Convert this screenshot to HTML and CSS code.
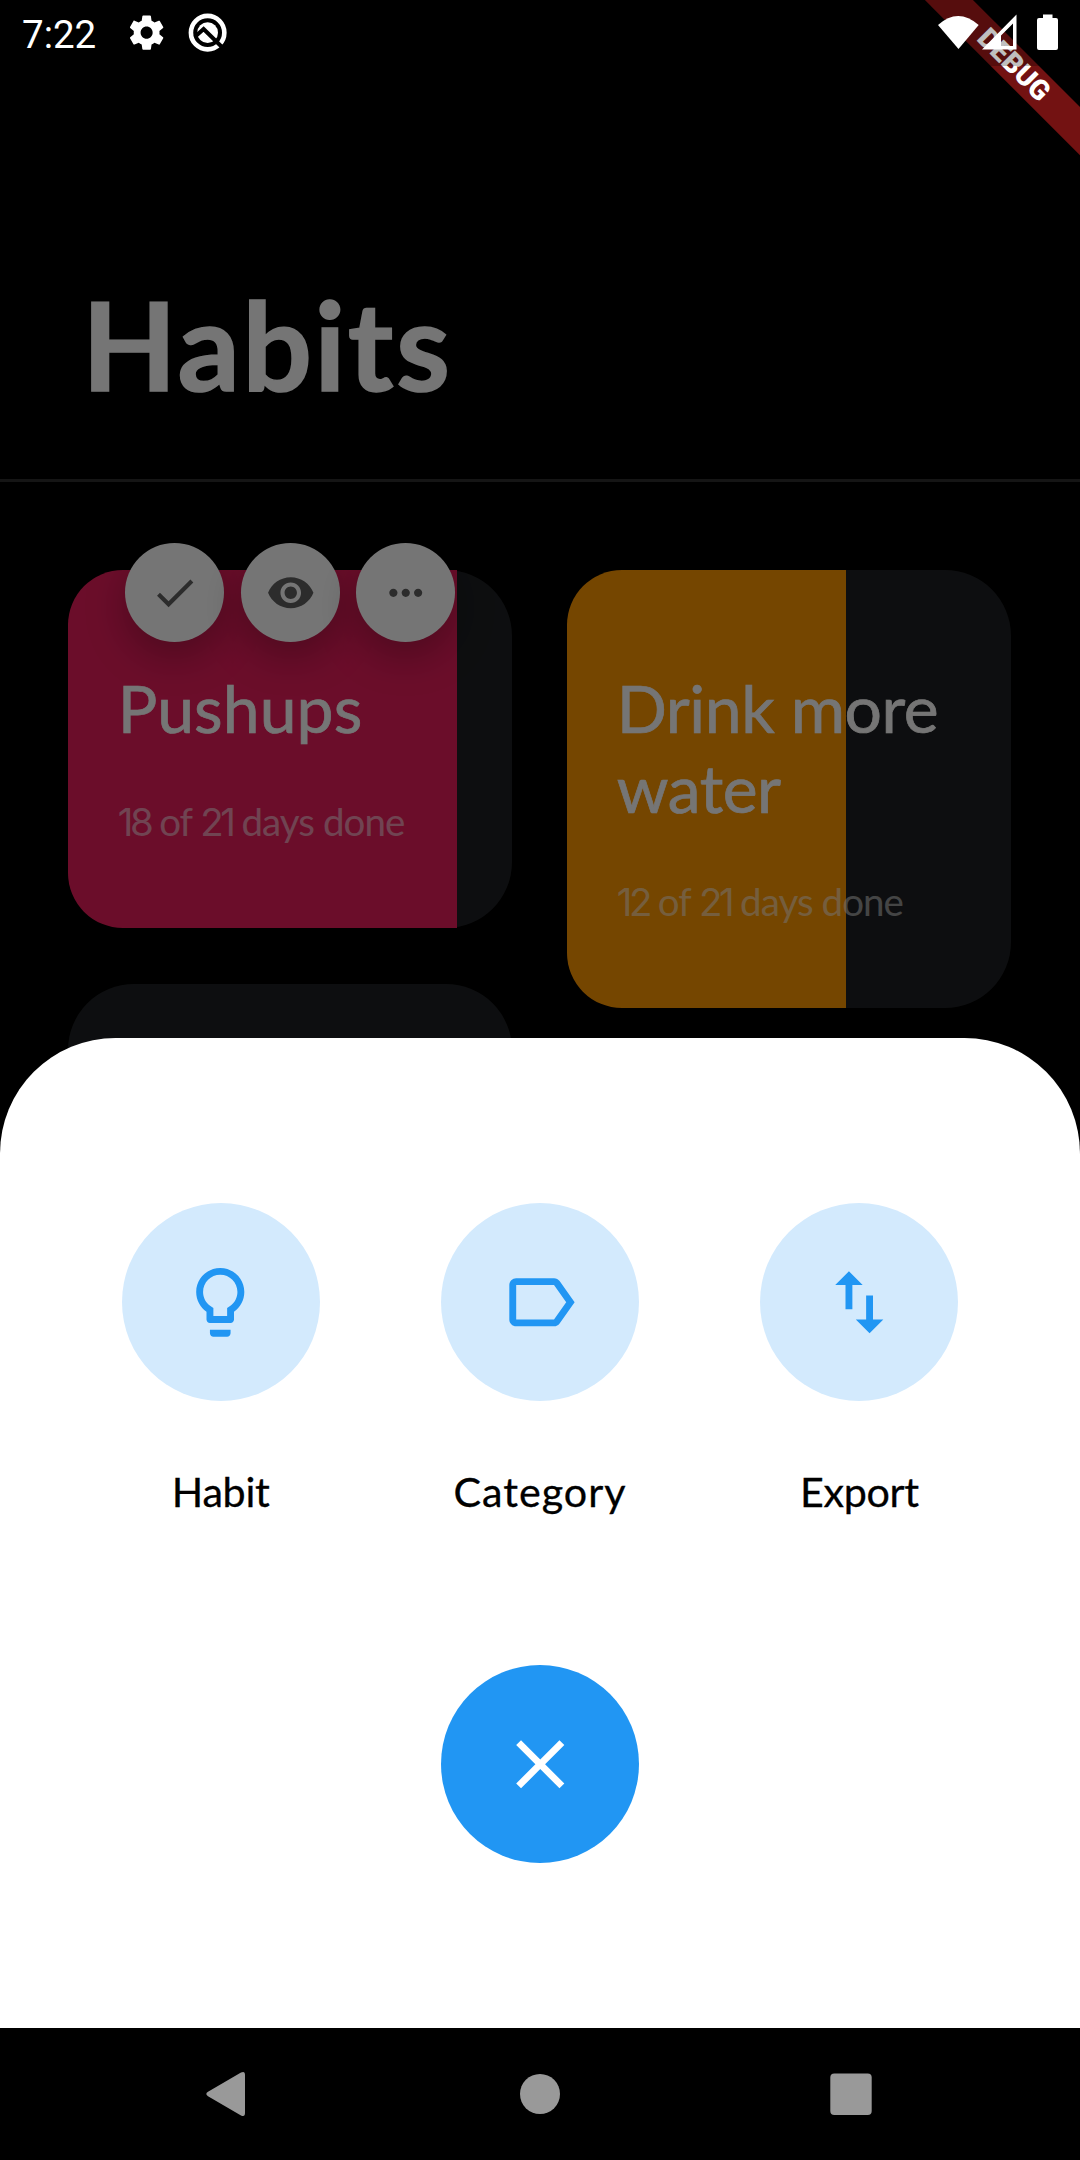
FILE: index.html
```
<!DOCTYPE html>
<html lang="en">
<head>
<meta charset="utf-8">
<title>Habits</title>
<link rel="stylesheet" href="styles.css">
</head>
<body>
<div class="screen">
  <main class="app">
    <header class="header"><h1 class="title">Habits</h1></header>
    <section class="board">
      <div class="column">
        <article class="card">
          <div class="fill fill-pink" style="width:87.5%"></div>
          <h2 class="card-title">Pushups</h2>
          <p class="card-count"><span class="num">18</span> of <span class="num">21</span> days done</p>
          <div class="quick-actions">
            <button class="quick"><svg viewBox="0 0 24 24"><path d="M9 16.17 4.83 12l-1.42 1.41L9 19 21 7l-1.41-1.41z"/></svg></button>
            <button class="quick"><svg viewBox="0 0 24 24"><path d="M12 4.5C7 4.5 2.73 7.61 1 12c1.73 4.39 6 7.5 11 7.5s9.27-3.11 11-7.5c-1.73-4.39-6-7.5-11-7.5zM12 17c-2.76 0-5-2.24-5-5s2.24-5 5-5 5 2.24 5 5-2.24 5-5 5zm0-8c-1.66 0-3 1.34-3 3s1.34 3 3 3 3-1.34 3-3-1.34-3-3-3z"/></svg></button>
            <button class="quick"><svg viewBox="0 0 24 24"><path d="M6 10c-1.1 0-2 .9-2 2s.9 2 2 2 2-.9 2-2-.9-2-2-2zm12 0c-1.1 0-2 .9-2 2s.9 2 2 2 2-.9 2-2-.9-2-2-2zm-6 0c-1.1 0-2 .9-2 2s.9 2 2 2 2-.9 2-2-.9-2-2-2z"/></svg></button>
          </div>
        </article>
        <article class="card card-empty"></article>
      </div>
      <div class="column">
        <article class="card">
          <div class="fill fill-orange" style="width:62.8%"></div>
          <h2 class="card-title card-title-long">Drink more<br>water</h2>
          <p class="card-count"><span class="num">12</span> of <span class="num">21</span> days done</p>
        </article>
      </div>
    </section>
    <div class="scrim"></div>
    <div class="sheet">
      <div class="options">
        <div class="option">
          <span class="option-icon"><svg viewBox="0 0 24 24"><path d="M9 21c0 .55.45 1 1 1h4c.55 0 1-.45 1-1v-1H9v1zm3-19C8.14 2 5 5.14 5 9c0 2.38 1.19 4.47 3 5.74V17c0 .55.45 1 1 1h6c.55 0 1-.45 1-1v-2.26c1.81-1.27 3-3.36 3-5.74 0-3.86-3.14-7-7-7zm2.85 11.1-.85.6V16h-4v-2.3l-.85-.6C7.8 12.16 7 10.63 7 9c0-2.76 2.24-5 5-5s5 2.24 5 5c0 1.63-.8 3.16-2.15 4.1z"/></svg></span>
          <span class="option-label">Habit</span>
        </div>
        <div class="option">
          <span class="option-icon"><svg viewBox="0 0 24 24"><path d="M17.63 5.84C17.27 5.33 16.67 5 16 5L5 5.01C3.9 5.01 3 5.9 3 7v10c0 1.1.9 1.99 2 1.99L16 19c.67 0 1.27-.33 1.63-.84L22 12l-4.37-6.16zM16 17H5V7h11l3.55 5L16 17z"/></svg></span>
          <span class="option-label option-label-wide">Category</span>
        </div>
        <div class="option">
          <span class="option-icon"><svg viewBox="0 0 24 24"><path d="M16 17.01V10h-2v7.01h-3L15 21l4-3.99h-3zM9 3 5 6.99h3V14h2V6.99h3L9 3z"/></svg></span>
          <span class="option-label">Export</span>
        </div>
      </div>
      <button class="close"><svg viewBox="0 0 24 24"><path d="M19 6.41 17.59 5 12 10.59 6.41 5 5 6.41 10.59 12 5 17.59 6.41 19 12 13.41 17.59 19 19 17.59 13.41 12z"/></svg></button>
    </div>
  </main>
  <nav class="navbar">
    <svg class="nav-icon" viewBox="0 0 44 46"><path d="M5 20.8 38 1.6q4-1.9 4 2.4v38q0 4.3-4 2.4L5 25.2q-3.4-2.2 0-4.4z"/></svg>
    <svg class="nav-icon" viewBox="0 0 44 46"><circle cx="22" cy="23" r="20"/></svg>
    <svg class="nav-icon" viewBox="0 0 44 46"><rect x="1.3" y="2.5" width="41.4" height="41.5" rx="4"/></svg>
  </nav>
  <div class="banner">DEBUG</div>
  <div class="status">
    <span class="time">7:22</span>
    <svg class="status-icon gear" viewBox="0 0 24 24"><path d="M19.43 12.98c.04-.32.07-.64.07-.98s-.03-.66-.07-.98l2.11-1.65c.19-.15.24-.42.12-.64l-2-3.46c-.12-.22-.39-.3-.61-.22l-2.49 1c-.52-.4-1.08-.73-1.69-.98l-.38-2.65C14.46 2.18 14.25 2 14 2h-4c-.25 0-.46.18-.49.42l-.38 2.65c-.61.25-1.17.59-1.69.98l-2.49-1c-.23-.09-.49 0-.61.22l-2 3.46c-.13.22-.07.49.12.64l2.11 1.65c-.04.32-.07.65-.07.98s.03.66.07.98l-2.11 1.65c-.19.15-.24.42-.12.64l2 3.46c.12.22.39.3.61.22l2.49-1c.52.4 1.08.73 1.69.98l.38 2.65c.03.24.24.42.49.42h4c.25 0 .46-.18.49-.42l.38-2.65c.61-.25 1.17-.59 1.69-.98l2.49 1c.23.09.49 0 .61-.22l2-3.46c.12-.22.07-.49-.12-.64l-2.11-1.65zM12 15.5c-1.930 0-3.5-1.57-3.5-3.5s1.57-3.5 3.5-3.5 3.5 1.57 3.5 3.5-1.57 3.5-3.5 3.5z"/></svg>
    <svg class="status-icon" viewBox="0 0 41 41">
      <mask id="cut"><rect width="41" height="41" fill="#fff"/><path d="M8 24.500l8.500-7.500L37 37" fill="none" stroke="#000" stroke-width="4"/></mask>
      <g mask="url(#cut)"><circle cx="20.500" cy="20.500" r="16.600" fill="none" stroke="#fff" stroke-width="4.600"/><circle cx="20.500" cy="20.500" r="10.300"/></g>
    </svg>
    <span class="spacer"></span>
    <svg class="signal" viewBox="0 0 124 40">
      <path d="M2 12Q22-6 42.700 12L22.500 36z"/>
      <path fill-rule="evenodd" d="M46 36.500 80.500 1.500V36.500zM65 33H77V10.500L65 22.500z"/>
      <path d="M107 1.500h9.500v3.500h3.500q2 0 2 2v28q0 2-2 2h-17q-2 0-2-2V7q0-2 2-2h4z"/>
    </svg>
  </div>
</div>
</body>
</html>
```
FILE: styles.css
```
* { box-sizing: border-box; }
body { margin: 0; background: #000; font-family: Lato, "Liberation Sans", sans-serif; }
h1, h2, p { margin: 0; font-weight: 400; }
button { border: 0; padding: 0; }
svg { display: block; fill: currentColor; }

.screen { position: relative; display: flex; flex-direction: column; width: 1080px; height: 2160px; overflow: hidden; background: #000; color: #fff; }
.app { position: relative; flex: 1; min-height: 0; overflow: hidden; }

.header { height: 482px; padding: 270px 0 0 82px; border-bottom: 3px solid #2e2e2e; }
.title { font-size: 123px; line-height: 148px; font-weight: 700; letter-spacing: 2.3px; -webkit-text-stroke: 1.5px currentColor; }

.board { display: grid; grid-template-columns: 1fr 1fr; gap: 55px; align-items: start; padding: 88px 68.75px 0 68.25px; }
.column { display: flex; flex-direction: column; gap: 56px; }
.card { position: relative; padding: 98px 0 83.5px 49.5px; border-radius: 66px; background: #1e2023; }
.card-empty { height: 357px; }
.fill { position: absolute; left: 0; top: 0; bottom: 0; border-radius: 55px 0 0 55px; }
.fill-pink { background: #e91e5c; }
.fill-orange { background: #ff9800; }
.card-title { position: relative; font-size: 66px; line-height: 80px; letter-spacing: .1px; -webkit-text-stroke: .7px currentColor; }
.card-title-long { letter-spacing: -.45px; }
.card-count { position: relative; margin-top: 50px; font-size: 38.5px; line-height: 46px; letter-spacing: -.95px; color: rgba(255, 255, 255, .54); white-space: nowrap; }
.num { font-family: Inter, sans-serif; letter-spacing: -3.5px; line-height: 1; }

.quick-actions { position: absolute; left: 57px; top: -27px; display: flex; gap: 16.5px; }
.quick { display: grid; place-items: center; width: 99px; height: 99px; border-radius: 50%; background: #fff; color: #616161; box-shadow: 0 14px 40px rgba(0, 0, 0, .28); }
.quick svg { width: 49.5px; height: 49.5px; }

.scrim { position: absolute; inset: 0; background: rgba(0, 0, 0, .54); }

.sheet { position: absolute; left: 0; right: 0; bottom: 0; height: 990px; padding: 165px 61px 0; display: flex; flex-direction: column; align-items: center; gap: 149px; border-radius: 115.5px 115.5px 0 0; background: #fff; color: #000; }
.options { display: grid; grid-template-columns: repeat(3, 1fr); align-self: stretch; }
.option { display: flex; flex-direction: column; align-items: center; gap: 65px; }
.option-icon, .close { display: grid; place-items: center; width: 198px; height: 198px; border-radius: 50%; }
.option-icon { background: #d3eafd; color: #2196f3; }
.option-icon svg, .close svg { width: 82.5px; height: 82.5px; }
.option-label { font-size: 41.25px; line-height: 50px; letter-spacing: -.3px; -webkit-text-stroke: .3px currentColor; }
.option-label-wide { letter-spacing: 1px; }
.close { background: #2196f3; color: #fff; }

.navbar { display: flex; align-items: center; justify-content: space-between; height: 132px; padding: 0 207px 0 203px; background: #000; color: #999; }
.nav-icon { width: 44px; height: 46px; }
.nav-icon:nth-child(2) { margin-left: 4px; }

.banner { position: absolute; left: 864px; top: 48px; width: 300px; height: 33.5px; transform: rotate(45deg); background: rgba(183, 28, 28, .627); font: 900 28px/33px Roboto, sans-serif; text-align: center; }

.status { position: absolute; left: 0; top: 0; width: 1080px; height: 66px; display: flex; align-items: center; padding: 0 20px 0 22px; background: rgba(0, 0, 0, .25); }
.time { width: 104px; padding-top: 3px; font: 38.5px/63px Roboto, sans-serif; }
.status-icon { width: 41.25px; height: 41.25px; }
.gear { margin-right: 19.5px; }
.spacer { flex: 1; }
.signal { width: 124px; height: 40px; }
```
